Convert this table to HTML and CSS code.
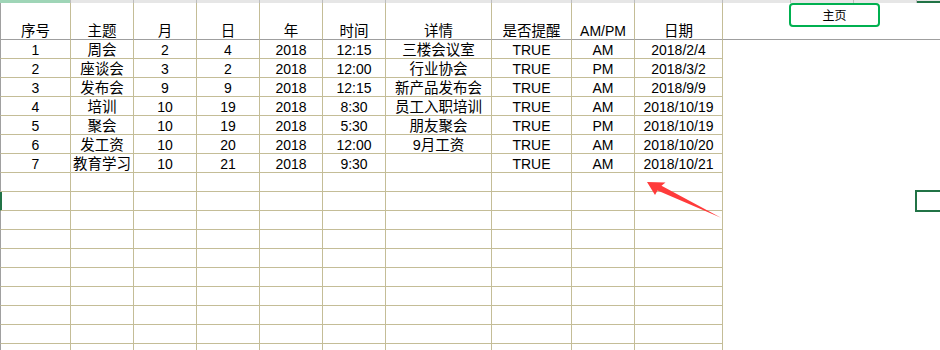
FILE: index.html
```html
<!DOCTYPE html>
<html lang="zh">
<head>
<meta charset="utf-8">
<title>Sheet</title>
<link rel="stylesheet" href="styles.css">
</head>
<body>
<div class="strip">
  <div class="seg seg-a sel"></div><div class="seg seg-b"></div><div class="seg seg-b"></div><div class="seg seg-b"></div><div class="seg seg-b"></div><div class="seg seg-b"></div><div class="seg seg-g"></div><div class="seg seg-h"></div><div class="seg seg-b"></div><div class="seg seg-j"></div><div class="seg seg-k"></div><div class="seg seg-b"></div><div class="seg seg-b"></div><div class="seg seg-last"></div>
</div>
<div class="sheet">
  <div class="c f h zh">序号</div><div class="c h zh">主题</div><div class="c h zh">月</div><div class="c h zh">日</div><div class="c h zh">年</div><div class="c h zh">时间</div><div class="c h zh">详情</div><div class="c h zh">是否提醒</div><div class="c h">AM/PM</div><div class="c h zh">日期</div><div class="x hx"><button class="home">主页</button></div>

  <div class="c f">1</div><div class="c zh">周会</div><div class="c">2</div><div class="c">4</div><div class="c">2018</div><div class="c">12:15</div><div class="c zh">三楼会议室</div><div class="c">TRUE</div><div class="c">AM</div><div class="c">2018/2/4</div><div class="x"></div>
  <div class="c f">2</div><div class="c zh">座谈会</div><div class="c">3</div><div class="c">2</div><div class="c">2018</div><div class="c">12:00</div><div class="c zh">行业协会</div><div class="c">TRUE</div><div class="c">PM</div><div class="c">2018/3/2</div><div class="x"></div>
  <div class="c f">3</div><div class="c zh">发布会</div><div class="c">9</div><div class="c">9</div><div class="c">2018</div><div class="c">12:15</div><div class="c zh">新产品发布会</div><div class="c">TRUE</div><div class="c">AM</div><div class="c">2018/9/9</div><div class="x"></div>
  <div class="c f">4</div><div class="c zh">培训</div><div class="c">10</div><div class="c">19</div><div class="c">2018</div><div class="c">8:30</div><div class="c zh">员工入职培训</div><div class="c">TRUE</div><div class="c">AM</div><div class="c">2018/10/19</div><div class="x"></div>
  <div class="c f">5</div><div class="c zh">聚会</div><div class="c">10</div><div class="c">19</div><div class="c">2018</div><div class="c">5:30</div><div class="c zh">朋友聚会</div><div class="c">TRUE</div><div class="c">PM</div><div class="c">2018/10/19</div><div class="x"></div>
  <div class="c f">6</div><div class="c zh">发工资</div><div class="c">10</div><div class="c">20</div><div class="c">2018</div><div class="c">12:00</div><div class="c zh">9月工资</div><div class="c">TRUE</div><div class="c">AM</div><div class="c">2018/10/20</div><div class="x"></div>
  <div class="c f">7</div><div class="c zh">教育学习</div><div class="c">10</div><div class="c">21</div><div class="c">2018</div><div class="c">9:30</div><div class="c"></div><div class="c">TRUE</div><div class="c">AM</div><div class="c">2018/10/21</div><div class="x"></div>

  <div class="c f"></div><div class="c"></div><div class="c"></div><div class="c"></div><div class="c"></div><div class="c"></div><div class="c"></div><div class="c"></div><div class="c"></div><div class="c"></div><div class="x"></div>
  <div class="c f row-sel"></div><div class="c"></div><div class="c"></div><div class="c"></div><div class="c"></div><div class="c"></div><div class="c"></div><div class="c"></div><div class="c"></div><div class="c"></div><div class="x"></div>
  <div class="c f"></div><div class="c"></div><div class="c"></div><div class="c"></div><div class="c"></div><div class="c"></div><div class="c"></div><div class="c"></div><div class="c"></div><div class="c"></div><div class="x"></div>
  <div class="c f"></div><div class="c"></div><div class="c"></div><div class="c"></div><div class="c"></div><div class="c"></div><div class="c"></div><div class="c"></div><div class="c"></div><div class="c"></div><div class="x"></div>
  <div class="c f"></div><div class="c"></div><div class="c"></div><div class="c"></div><div class="c"></div><div class="c"></div><div class="c"></div><div class="c"></div><div class="c"></div><div class="c"></div><div class="x"></div>
  <div class="c f"></div><div class="c"></div><div class="c"></div><div class="c"></div><div class="c"></div><div class="c"></div><div class="c"></div><div class="c"></div><div class="c"></div><div class="c"></div><div class="x"></div>
  <div class="c f"></div><div class="c"></div><div class="c"></div><div class="c"></div><div class="c"></div><div class="c"></div><div class="c"></div><div class="c"></div><div class="c"></div><div class="c"></div><div class="x"></div>
  <div class="c f"></div><div class="c"></div><div class="c"></div><div class="c"></div><div class="c"></div><div class="c"></div><div class="c"></div><div class="c"></div><div class="c"></div><div class="c"></div><div class="x"></div>
  <div class="c f"></div><div class="c"></div><div class="c"></div><div class="c"></div><div class="c"></div><div class="c"></div><div class="c"></div><div class="c"></div><div class="c"></div><div class="c"></div><div class="x"></div>
  <div class="c f"></div><div class="c"></div><div class="c"></div><div class="c"></div><div class="c"></div><div class="c"></div><div class="c"></div><div class="c"></div><div class="c"></div><div class="c"></div><div class="x"></div>
</div>
<div class="active-cell"></div>
<svg class="arrow" width="940" height="350" viewBox="0 0 940 350" aria-hidden="true">
  <polygon points="647,182 665.5,182.5 661.5,185.8 721,217.8 657.5,190.5 655,195" fill="#ff3b3b"/>
</svg>
</body>
</html>
```

FILE: styles.css
```css
html, body {
  margin: 0;
  padding: 0;
  background: #ffffff;
  overflow: hidden;
  width: 940px;
  height: 350px;
}

body {
  font-family: "Liberation Sans", Arial, "Noto Sans CJK SC", sans-serif;
  font-size: 14px;
  color: #000;
  position: relative;
}

.strip {
  display: flex;
  height: 3px;
  background: #e6e6e6;
}

.seg {
  height: 3px;
  border-right: 1px solid #bdbdbd;
  flex: none;
}

.seg-a { width: 70px; }
.seg-b { width: 62px; }
.seg-g { width: 105px; }
.seg-h { width: 79px; }
.seg-j { width: 87px; }
.seg-k { width: 67px; }
.seg-last {
  flex: 1;
  border-right: none;
  box-sizing: border-box;
  border-bottom: 2px solid #217346;
}

.sel { background: #9fd5b7; }

.sheet {
  display: grid;
  grid-template-columns: 71px 63px 63px 63px 63px 63px 106px 80px 63px 88px 1fr;
  grid-template-rows: 37px;
  grid-auto-rows: 19px;
}

.c {
  box-sizing: border-box;
  border-right: 1px solid #c4bd97;
  border-bottom: 1px solid #c4bd97;
  text-align: center;
  padding-top: 3px;
  line-height: 14px;
  white-space: nowrap;
}

.zh {
  font-size: 14.5px;
}

.f {
  border-left: 1px solid #a0a0a0;
}

.row-sel {
  border-left-color: #217346;
  box-shadow: inset 1px 0 0 #217346;
}

.h {
  padding-top: 21px;
  border-bottom-color: #9f9f9f;
}

.x {
  box-sizing: border-box;
}

.hx {
  border-bottom: 1px solid #9f9f9f;
  padding-left: 66px;
}

.home {
  display: block;
  box-sizing: border-box;
  width: 91px;
  height: 24px;
  margin: 0;
  padding: 0;
  background: #ffffff;
  border: 2px solid #00b050;
  border-radius: 4px;
  font-family: "Noto Sans CJK SC", sans-serif;
  font-size: 12px;
  line-height: 18px;
  color: #000;
}

.active-cell {
  position: absolute;
  left: 915px;
  top: 190px;
  width: 40px;
  height: 22px;
  box-sizing: border-box;
  border: 2px solid #217346;
}

.arrow {
  position: absolute;
  left: 0;
  top: 0;
  pointer-events: none;
}
```
